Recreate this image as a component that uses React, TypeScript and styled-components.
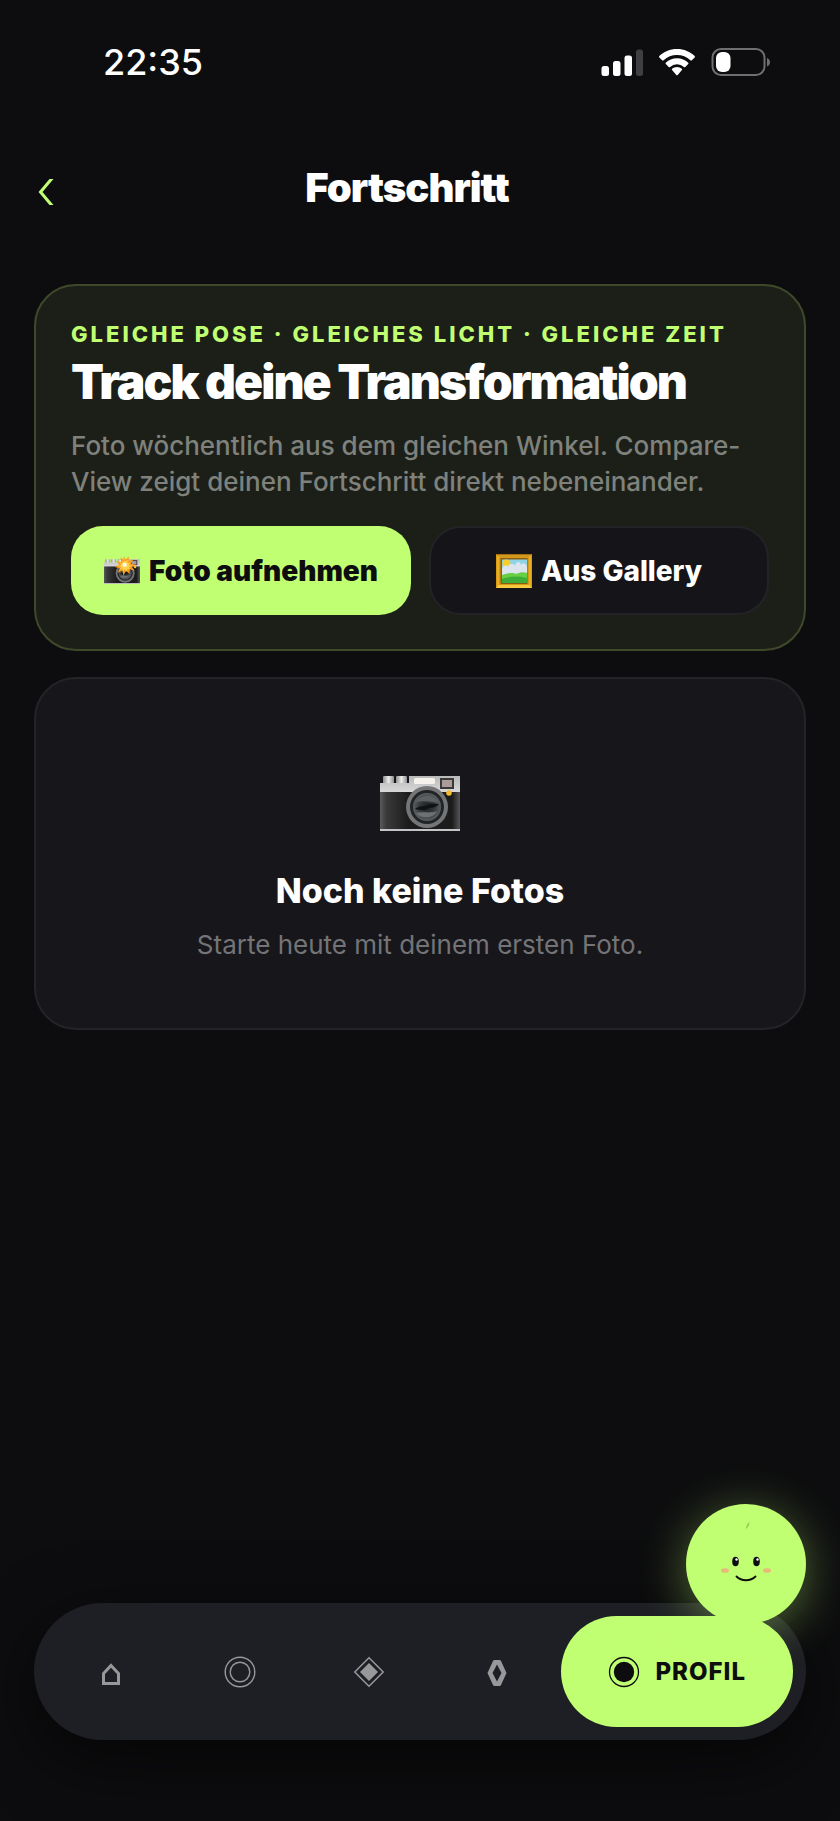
import { useState } from 'react';
import type { ReactNode } from 'react';
import styled, { createGlobalStyle } from 'styled-components';

type TabId = 'home' | 'circle' | 'plan' | 'food' | 'profile';

interface Tab {
  id: TabId;
  label: string;
  icon: ReactNode;
}

/* ================= ICONS ================= */

const SignalIcon = () => (
  <svg width="42" height="28" viewBox="0 0 42 28" aria-hidden="true">
    <rect x="0.500" y="18" width="7.500" height="10" rx="2.500" fill="#fff" />
    <rect x="12" y="13" width="7.500" height="15" rx="2.500" fill="#fff" />
    <rect x="23.500" y="7.500" width="7.500" height="20.500" rx="2.500" fill="#fff" />
    <rect x="35" y="1.500" width="7" height="26.500" rx="2.500" fill="#3f3f41" />
  </svg>
);

const WifiIcon = () => (
  <svg width="36" height="28" viewBox="0 0 36 28" aria-hidden="true">
    <path d="M18 1C11 1 4.600 3.700 0.300 8.100a1 1 0 0 0 0 1.300l2.900 2.900a1 1 0 0 0 1.400 0A19.300 19.300 0 0 1 18 6.900a19.300 19.300 0 0 1 13.400 5.400a1 1 0 0 0 1.400 0l2.900-2.900a1 1 0 0 0 0-1.300C31.400 3.700 25 1 18 1z" fill="#fff" />
    <path d="M18 10.200c-4.300 0-8.300 1.700-11.200 4.500a1 1 0 0 0 0 1.400l2.900 2.800a1 1 0 0 0 1.400 0a10 10 0 0 1 13.800 0a1 1 0 0 0 1.400 0l2.900-2.800a1 1 0 0 0 0-1.400A16.200 16.200 0 0 0 18 10.200z" fill="#fff" />
    <path d="M18 18.900c-1.900 0-3.600.7-4.900 1.900a.9.900 0 0 0 0 1.300l4.200 4.800a1 1 0 0 0 1.400 0l4.200-4.800a.9.900 0 0 0 0-1.300a7.200 7.200 0 0 0-4.900-1.900z" fill="#fff" />
  </svg>
);

const BatteryIcon = () => (
  <svg width="60" height="28" viewBox="0 0 60 28" aria-hidden="true">
    <rect x="1.500" y="1" width="52" height="26" rx="8.500" fill="none" stroke="#6f6f70" strokeWidth="2" />
    <path d="M56 10v8.500c2-.8 3-2.400 3-4.200s-1-3.500-3-4.300z" fill="#6f6f70" />
    <rect x="5" y="4" width="14.500" height="20" rx="6" fill="#fff" />
  </svg>
);

const BackIcon = () => (
  <svg width="18" height="26" viewBox="0 0 18 26" aria-hidden="true">
    <path d="M13.500 0H17.500L6.500 13l11 13h-4L2.500 13z" fill="#c1ff72" />
  </svg>
);

const CameraArt = ({ width, flash }: { width: number; flash?: boolean }) => (
  <svg width={width} height={width * 0.75} viewBox="0 0 80 60" aria-hidden="true">
    <defs>
      <linearGradient id="chrome" x1="0" y1="0" x2="0" y2="1">
        <stop offset="0" stopColor="#b9b9ba" />
        <stop offset="1" stopColor="#dadada" />
      </linearGradient>
      <linearGradient id="knob" x1="0" y1="0" x2="1" y2="0">
        <stop offset="0" stopColor="#8d8d8e" />
        <stop offset="0.500" stopColor="#ececec" />
        <stop offset="1" stopColor="#8f8f90" />
      </linearGradient>
      <linearGradient id="leather" x1="0" y1="0" x2="1" y2="0">
        <stop offset="0" stopColor="#5a5a5b" />
        <stop offset="0.080" stopColor="#3a3a3b" />
        <stop offset="0.350" stopColor="#1c1c1d" />
        <stop offset="0.900" stopColor="#1c1c1d" />
        <stop offset="1" stopColor="#565657" />
      </linearGradient>
      <radialGradient id="glass">
        <stop offset="0" stopColor="#1b1d1f" />
        <stop offset="0.600" stopColor="#3a3d40" />
        <stop offset="1" stopColor="#5b5f62" />
      </radialGradient>
    </defs>
    <rect x="3" y="5" width="11" height="8" rx="1" fill="url(#knob)" />
    <rect x="16" y="5" width="11" height="8" rx="1" fill="url(#knob)" />
    <path d="M0 12h29V5h51v17H0z" fill="url(#chrome)" />
    <rect x="0" y="21" width="80" height="38" fill="url(#leather)" />
    <rect x="0" y="58" width="80" height="2" fill="#c4c4c6" />
    <rect x="34" y="7" width="21" height="6" rx="1.500" fill="#f4f2ea" />
    <rect x="60" y="7" width="14" height="11" fill="#3d3838" />
    <rect x="62" y="9" width="10" height="7" fill="#a99c99" />
    <circle cx="47" cy="36" r="21" fill="#737577" />
    <circle cx="47" cy="36" r="17" fill="#222325" />
    <circle cx="47" cy="36" r="14" fill="url(#glass)" />
    <path d="M35 31c5-7 18-9 24 0-7 1-10-2-24 0z" fill="#5c6063" />
    <path d="M36 42c8-2 14 1 21-2-3 7-15 9-21 2z" fill="#6d7174" />
    <path d="M35 38c5-4 9-2 12-4s9-1 12-1c-4 5-9 3-12 5s-8 1-12 0z" fill="#111214" />
    <circle cx="69" cy="22" r="2.800" fill="#f5bd2c" />
    {flash && (
      <g>
        <path
          d="m44-3 4 9 7-7 0 10 10-3-5 9 12 2-11 5 7 8-11-3 0 11-8-7-6 10-2-11-11 5 5-10-11-3 10-5-7-8 11 2-1-10 7 5z"
          fill="#fb9c1c"
        />
        <path
          d="m46 4 2 6 5-4-1 7 7-1-4 5 7 3-7 2 3 6-6-2-1 6-5-4-4 5-1-7-6 2 3-5-6-3 7-2-4-5 6 1 0-6 4 4z"
          fill="#ffd24a"
        />
        <circle cx="46" cy="17" r="5" fill="#fff8d8" />
      </g>
    )}
  </svg>
);

const PictureArt = () => (
  <svg width="36" height="34" viewBox="0 0 36 34" aria-hidden="true">
    <rect width="36" height="34" fill="#d99a12" />
    <path d="M0 0h36l-3 3H3z" fill="#a8700c" />
    <path d="M0 34h36l-3-3H3z" fill="#f6cd3f" />
    <rect x="2" y="2" width="32" height="30" fill="none" stroke="#f3c23a" strokeWidth="1" />
    <rect x="4.500" y="4" width="27" height="26" fill="#8a5d12" />
    <rect x="6" y="5.500" width="25" height="23.500" fill="#8fd3e6" />
    <circle cx="10.500" cy="9.500" r="4" fill="#f4d02f" />
    <path d="M6 14c2-3 5-3 6-1 1-4 6-4 7-1 1-5 5-5 6-1 2-3 6-1 6 2v9H6z" fill="#dce5ee" />
    <path d="M6 21c6-2 11-3 14-1 4-2 8-2 11-1v10H6z" fill="#69cf45" />
    <path d="M6 25c7-3 16-3 25-1v5H6z" fill="#3fae38" />
  </svg>
);

const HomeIcon = () => (
  <svg width="32" height="32" viewBox="0 0 32 32" aria-hidden="true">
    <path d="M16 9.500 23.500 17.500V27.500h-15v-10z" fill="none" stroke="currentColor" strokeWidth="3" />
  </svg>
);

const RingsIcon = () => (
  <svg width="32" height="32" viewBox="0 0 32 32" aria-hidden="true">
    <circle cx="16" cy="16" r="14.800" fill="none" stroke="currentColor" strokeWidth="1.400" />
    <circle cx="16" cy="16" r="9.800" fill="none" stroke="currentColor" strokeWidth="1.400" />
  </svg>
);

const DiamondIcon = () => (
  <svg width="32" height="32" viewBox="0 0 32 32" aria-hidden="true">
    <path d="M16 1.800 30.200 16 16 30.200 1.800 16z" fill="none" stroke="currentColor" strokeWidth="1.500" />
    <path d="M16 7 25 16 16 25 7 16z" fill="currentColor" />
  </svg>
);

const LozengeIcon = () => (
  <svg width="32" height="32" viewBox="0 0 32 32" aria-hidden="true">
    <path
      d="M13.500 4h5q1 0 1.500 1L25.500 17 20 29q-.5 1-1.500 1h-5q-1 0-1.500-1L6.500 17 12 5q.5-1 1.500-1zM16 8.500 11.500 17 16 25.500 20.500 17z"
      fill="currentColor"
      fillRule="evenodd"
    />
  </svg>
);

const FisheyeIcon = () => (
  <svg width="32" height="32" viewBox="0 0 32 32" aria-hidden="true">
    <circle cx="16" cy="16" r="14.500" fill="none" stroke="currentColor" strokeWidth="1.300" />
    <circle cx="16" cy="16" r="10.200" fill="currentColor" />
  </svg>
);

const BuddyFace = () => (
  <svg width="120" height="120" viewBox="0 0 120 120" aria-hidden="true">
    <path d="M60 25c0-3 1.500-5.500 3.500-7-.2 3-1.500 5.500-3.500 7z" fill="#8fcf52" />
    <ellipse cx="49.500" cy="57.500" rx="3.300" ry="4.700" fill="#0d0d0f" />
    <ellipse cx="70.500" cy="57.500" rx="3.300" ry="4.700" fill="#0d0d0f" />
    <circle cx="50.500" cy="55.500" r="1.200" fill="#fff" />
    <circle cx="71.500" cy="55.500" r="1.200" fill="#fff" />
    <ellipse cx="39" cy="66.500" rx="4" ry="2.300" fill="#e8b979" />
    <ellipse cx="81" cy="66.500" rx="4" ry="2.300" fill="#e8b979" />
    <path d="M50.500 72.500c5 5 14 5 19 0" fill="none" stroke="#0d0d0f" strokeWidth="1.800" strokeLinecap="round" />
  </svg>
);

const TABS: Tab[] = [
  { id: 'home', label: 'Home', icon: <HomeIcon /> },
  { id: 'circle', label: 'Training', icon: <RingsIcon /> },
  { id: 'plan', label: 'Plan', icon: <DiamondIcon /> },
  { id: 'food', label: 'Food', icon: <LozengeIcon /> },
  { id: 'profile', label: 'Profil', icon: <FisheyeIcon /> },
];

const App = () => {
  const [activeTab, setActiveTab] = useState<TabId>('profile');

  return (
    <Screen>
      <GlobalStyle />

      <StatusBar>
        <Clock>22:35</Clock>
        <StatusIcons>
          <SignalIcon />
          <WifiIcon />
          <BatteryIcon />
        </StatusIcons>
      </StatusBar>

      <Header>
        <BackButton type="button" aria-label="Zurück">
          <BackIcon />
        </BackButton>
        <PageTitle>Fortschritt</PageTitle>
      </Header>

      <Content>
        <HeroCard>
          <Eyebrow>Gleiche Pose · Gleiches Licht · Gleiche Zeit</Eyebrow>
          <HeroTitle>Track deine Transformation</HeroTitle>
          <HeroText>
            Foto wöchentlich aus dem gleichen Winkel. Compare-View zeigt deinen
            Fortschritt direkt nebeneinander.
          </HeroText>
          <Actions>
            <ActionButton type="button" $primary>
              <CameraArt width={36} flash />
              Foto aufnehmen
            </ActionButton>
            <ActionButton type="button">
              <PictureArt />
              Aus Gallery
            </ActionButton>
          </Actions>
        </HeroCard>

        <EmptyCard>
          <CameraArt width={80} />
          <EmptyTitle>Noch keine Fotos</EmptyTitle>
          <EmptyText>Starte heute mit deinem ersten Foto.</EmptyText>
        </EmptyCard>
      </Content>

      <Dock>
        <TabBar>
          {TABS.map((tab) => (
            <TabButton
              key={tab.id}
              type="button"
              aria-label={tab.label}
              $active={tab.id === activeTab}
              onClick={() => setActiveTab(tab.id)}
            >
              {tab.icon}
              {tab.id === activeTab && <span>{tab.label}</span>}
            </TabButton>
          ))}
        </TabBar>
        <BuddyButton type="button" aria-label="Buddy">
          <BuddyFace />
        </BuddyButton>
      </Dock>
    </Screen>
  );
};

export default App;

/* ================= STYLES ================= */

const GlobalStyle = createGlobalStyle`
  * {
    box-sizing: border-box;
  }

  body {
    margin: 0;
    background: #0d0d0f;
    color: #fff;
    font-family: Inter, 'Liberation Sans', sans-serif;
  }

  h1, h2, h3, p {
    margin: 0;
  }

  button {
    border: none;
    padding: 0;
    background: none;
    color: inherit;
    font-family: inherit;
    cursor: pointer;
  }

  svg {
    display: block;
    flex-shrink: 0;
    overflow: visible;
  }
`;

const Screen = styled.div`
  min-height: 100vh;
  display: flex;
  flex-direction: column;
`;

const StatusBar = styled.div`
  display: flex;
  align-items: center;
  justify-content: space-between;
  padding: 40px 69px 0 103px;
`;

const Clock = styled.span`
  font-size: 36px;
  line-height: 44px;
  font-weight: 500;
`;

const StatusIcons = styled.div`
  display: flex;
  align-items: center;
  gap: 16px;
`;

const Header = styled.header`
  display: grid;
  grid-template-columns: 40px 1fr 66px;
  align-items: center;
  padding: 80px 34px 0;
`;

const BackButton = styled.button`
  display: flex;
  align-items: center;
  height: 48px;
  padding: 8px 2px 0;
`;

const PageTitle = styled.h1`
  text-align: center;
  font-size: 40px;
  line-height: 48px;
  font-weight: 900;
  letter-spacing: -1px;
`;

const Content = styled.main`
  flex: 1;
  display: flex;
  flex-direction: column;
  gap: 26px;
  padding: 72px 34px 40px;
`;

const Card = styled.section`
  border: 2px solid #242428;
  border-radius: 42px;
  background: #17171b;
`;

const HeroCard = styled(Card)`
  padding: 34px 35px;
  border-color: #3f492a;
  background: #1c1f18;
`;

const Eyebrow = styled.p`
  color: #c1ff72;
  font-size: 22px;
  line-height: 28px;
  font-weight: 800;
  letter-spacing: 3px;
  text-transform: uppercase;
`;

const HeroTitle = styled.h2`
  margin-top: 6px;
  font-size: 48px;
  line-height: 56px;
  font-weight: 900;
  letter-spacing: -2px;
`;

const HeroText = styled.p`
  margin-top: 18px;
  color: #7f827c;
  font-size: 26px;
  line-height: 36px;
  font-weight: 500;
`;

const Actions = styled.div`
  display: grid;
  grid-template-columns: 1fr 1fr;
  gap: 18px;
  margin-top: 26px;
`;

const ActionButton = styled.button<{ $primary?: boolean }>`
  display: flex;
  align-items: center;
  justify-content: center;
  gap: 9px;
  height: 89px;
  border: ${({ $primary }) => ($primary ? 'none' : '2px solid #232327')};
  border-radius: 32px;
  background: ${({ $primary }) => ($primary ? '#c1ff72' : '#151519')};
  color: ${({ $primary }) => ($primary ? '#0d0d0f' : '#fff')};
  font-size: 28px;
  font-weight: ${({ $primary }) => ($primary ? 900 : 800)};
`;

const EmptyCard = styled(Card)`
  display: flex;
  flex-direction: column;
  align-items: center;
  padding: 92px 34px 66px;
`;

const EmptyTitle = styled.h3`
  margin-top: 38px;
  font-size: 34px;
  line-height: 44px;
  font-weight: 800;
`;

const EmptyText = styled.p`
  margin-top: 14px;
  color: #747477;
  font-size: 26px;
  line-height: 35px;
`;

const Dock = styled.div`
  position: relative;
  margin: 0 34px 81px;
`;

const TabBar = styled.nav`
  display: flex;
  padding: 13px;
  border-radius: 69px;
  background: #1e1f24;
  box-shadow: 0 20px 70px rgba(0, 0, 0, 0.6);
`;

const TabButton = styled.button<{ $active: boolean }>`
  flex: ${({ $active }) => ($active ? 'none' : '1')};
  display: flex;
  align-items: center;
  justify-content: center;
  gap: 15px;
  height: 111px;
  padding: ${({ $active }) => ($active ? '0 47px' : '0')};
  border-radius: 56px;
  background: ${({ $active }) => ($active ? '#c1ff72' : 'transparent')};
  color: ${({ $active }) => ($active ? '#0d0d0f' : '#98989b')};
  font-size: 24px;
  font-weight: 800;
  letter-spacing: 1px;
  text-transform: uppercase;
`;

/* floats above the right end of the tab bar */
const BuddyButton = styled.button`
  position: absolute;
  right: 0;
  bottom: calc(100% - 21px);
  width: 120px;
  height: 120px;
  border-radius: 50%;
  background: #c1ff72;
  box-shadow: 0 8px 48px rgba(193, 255, 114, 0.4);
`;
